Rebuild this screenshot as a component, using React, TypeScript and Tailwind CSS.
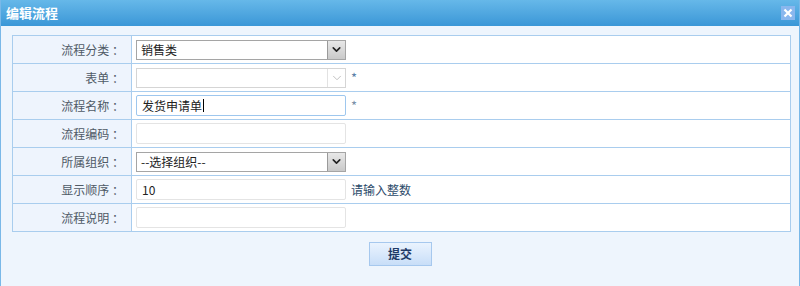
import { ChevronDown } from 'lucide-react';

const font = { fontFamily: '"Noto Sans CJK SC", "Noto Sans", sans-serif' };

function Select({ value, disabled }: { value: string; disabled?: boolean }) {
  return (
    <div
      className={
        'flex h-[20px] w-[210px] items-center border bg-white ' +
        (disabled ? 'border-[#d5d5d5]' : 'border-[#a5a5a5]')
      }
    >
      <span className="flex-1 pl-[4px] text-[12px] leading-none text-[#222]">{value}</span>
      {disabled ? (
        <span className="flex h-full w-[18px] items-center justify-center border-l border-[#e2e2e2] bg-white text-[#b8b8b8]">
          <ChevronDown size={14} strokeWidth={1.5} />
        </span>
      ) : (
        <span className="flex h-full w-[18px] items-center justify-center border-l border-[#9a9a9a] bg-gradient-to-b from-[#e8e8e8] to-[#c9c9c9] text-[#222]">
          <ChevronDown size={13} strokeWidth={3} />
        </span>
      )}
    </div>
  );
}

function TextInput({ value, focused }: { value?: string; focused?: boolean }) {
  return (
    <div
      className={
        'flex h-[21px] w-[210px] items-center rounded-[2px] border bg-white pl-[5px] text-[12px] text-[#222] ' +
        (focused ? 'border-[#9ec7ee]' : 'border-[#e4e4e4]')
      }
    >
      {value}
      {focused && <span className="ml-[1px] h-[13px] w-px bg-black" />}
    </div>
  );
}

const rows: { label: string; field: React.ReactNode; note?: React.ReactNode }[] = [
  { label: '流程分类', field: <Select value="销售类" /> },
  { label: '表单', field: <Select value="" disabled />, note: <span className="text-[13px] text-[#5a7fa8]">*</span> },
  { label: '流程名称', field: <TextInput value="发货申请单" focused />, note: <span className="text-[13px] text-[#7a8fa8]">*</span> },
  { label: '流程编码', field: <TextInput /> },
  { label: '所属组织', field: <Select value="--选择组织--" /> },
  { label: '显示顺序', field: <TextInput value="10" />, note: <span className="text-[#2c4a6a]">请输入整数</span> },
  { label: '流程说明', field: <TextInput /> },
];

export default function App() {
  return (
    <div style={font} className="h-[286px] w-[800px] overflow-hidden border-x border-[#79b8e8] bg-[#eef5fd]">
      <div className="flex h-[26px] items-center justify-between bg-gradient-to-b from-[#66b8e9] to-[#3a97d7] pl-[5px] pr-[4px]">
        <span className="text-[13px] font-bold text-white">编辑流程</span>
        <span className="flex h-[14px] w-[14px] items-center justify-center bg-[#8ab7ee] text-white">
          <svg width="10" height="10" viewBox="0 0 10 10">
            <path d="M1.5 1.5 L8.5 8.5 M8.5 1.5 L1.5 8.5" stroke="white" strokeWidth="2.2" />
          </svg>
        </span>
      </div>
      <div className="px-[11px] pt-[9px]">
        <table className="w-[779px] border-collapse">
          <tbody>
            {rows.map((r) => (
              <tr key={r.label} className="h-[28px]">
                <td className="w-[119px] border border-[#a9cdee] bg-[#eef4fd] pr-[7px] text-right text-[12px] text-[#4f5a66]">
                  {r.label} ：
                </td>
                <td className="border border-[#a9cdee] bg-white pl-[4px]">
                  <div className="flex items-center gap-[5px] text-[12px]">
                    {r.field}
                    {r.note}
                  </div>
                </td>
              </tr>
            ))}
          </tbody>
        </table>
        <div className="flex justify-center pt-[10px]">
          <button className="h-[24px] w-[63px] border border-[#a6c8ee] bg-gradient-to-b from-[#eaf3fe] to-[#c8def8] text-[12px] font-bold text-[#1f3a66]">
            提交
          </button>
        </div>
      </div>
    </div>
  );
}
